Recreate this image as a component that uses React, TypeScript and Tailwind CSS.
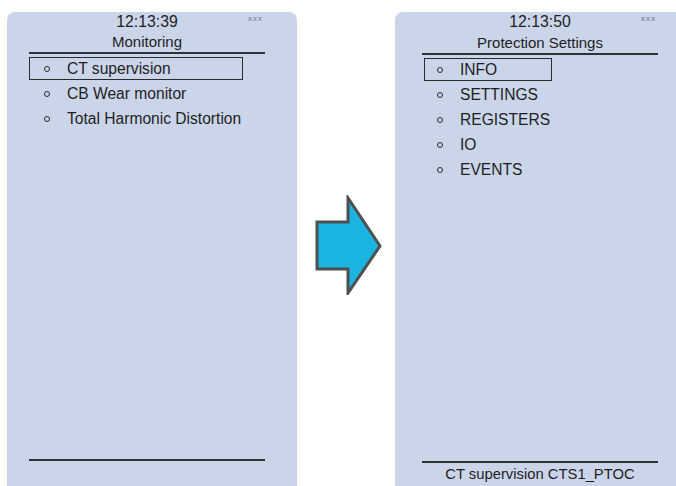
import React from "react";

const font = { fontFamily: '"Liberation Sans", Arial, sans-serif' };

function Bullet() {
  return <span className="inline-block w-[6px] h-[6px] rounded-full border-[1.5px] border-[#2a2a2a]" />;
}

function Item({ label, selected, boxW, boxX }: { label: string; selected?: boolean; boxW: number; boxX: number }) {
  return (
    <div className="relative h-[25px] flex items-center">
      {selected && (
        <div
          className="absolute top-[1px] bottom-[1px] border-[1.5px] border-[#2a2a2a]"
          style={{ left: boxX, width: boxW }}
        />
      )}
      <div className="w-[38px] shrink-0 flex justify-start pl-[15px]">
        <Bullet />
      </div>
      <span className="text-[15.6px] leading-[20px] text-[#1e1e1e] whitespace-nowrap">{label}</span>
    </div>
  );
}

function Panel({
  time,
  title,
  items,
  boxW,
  boxX,
  padL,
  footer,
  lineGap,
}: {
  time: string;
  title: string;
  items: string[];
  boxW: number;
  boxX: number;
  padL: number;
  footer?: string;
  lineGap: number;
}) {
  return (
    <div
      className="relative w-[290px] h-[474px] shrink-0 rounded-t-[8px] bg-[#cbd5ea] flex flex-col"
      style={{ paddingLeft: padL }}
    >
      <div
        className="absolute top-[3px] text-[8px] leading-[8px] tracking-[1px] text-[#6f7482]"
        style={{ left: padL + 219 }}
      >
        xxx
      </div>
      <div className="w-[236px] flex flex-col">
        <div className="text-[15.8px] leading-[20px] text-center text-[#1e1e1e]">{time}</div>
        <div className="text-[15px] leading-[20px] text-center text-[#1e1e1e]" style={{ marginTop: lineGap }}>
          {title}
        </div>
        <div className="h-[2px] bg-[#2e3138]" />
        <div className="mt-[2px] flex flex-col">
          {items.map((it, i) => (
            <Item key={it} label={it} selected={i === 0} boxW={boxW} boxX={boxX} />
          ))}
        </div>
      </div>
      <div className="flex-1" />
      <div className="w-[236px] h-[2px] bg-[#2e3138]" />
      {footer ? (
        <div className="w-[236px] mt-[1px] mb-[2px] text-[14.8px] leading-[20px] text-center text-[#1e1e1e] whitespace-nowrap">
          {footer}
        </div>
      ) : (
        <div className="h-[25px]" />
      )}
    </div>
  );
}

export default function App() {
  return (
    <div className="w-[676px] h-[486px] overflow-hidden bg-white flex items-start pt-[12px] pl-[7px]" style={font}>
      <Panel
        time="12:13:39"
        title="Monitoring"
        items={["CT supervision", "CB Wear monitor", "Total Harmonic Distortion"]}
        boxW={214}
        boxX={0}
        padL={22}
        lineGap={0}
      />
      <div className="w-[98px] shrink-0 mt-[183px]">
        <svg width="98" height="100" viewBox="0 0 98 100">
          <polygon
            points="20,27 51,27 51,3 83,51 51,98 51,74 20,74"
            fill="#1bb3e0"
            stroke="#4d5052"
            strokeWidth="3"
            strokeLinejoin="miter"
          />
        </svg>
      </div>
      <Panel
        time="12:13:50"
        title="Protection Settings"
        items={["INFO", "SETTINGS", "REGISTERS", "IO", "EVENTS"]}
        boxW={128}
        boxX={2}
        padL={27}
        footer="CT supervision CTS1_PTOC"
        lineGap={1}
      />
    </div>
  );
}
